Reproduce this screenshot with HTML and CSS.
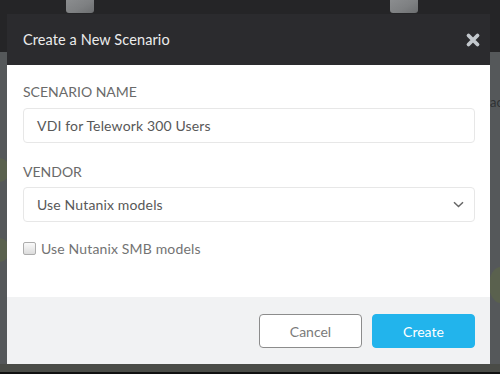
FILE: index.html
```html
<!DOCTYPE html>
<html>
<head>
<meta charset="utf-8">
<link rel="stylesheet" href="styles.css">
</head>
<body>
<div class="app">
  <div class="topbar">
    <span class="tile tile-a"></span>
    <span class="tile tile-b"></span>
  </div>
  <div class="canvas">
    <span class="blob blob-1"></span>
    <span class="blob blob-2"></span>
    <span class="blob blob-3"></span>
    <span class="bg-text">ac</span>
  </div>
  <div class="bottombar"></div>

  <div class="modal">
    <div class="modal-header">
      <h1 class="modal-title">Create a New Scenario</h1>
      <button class="close" aria-label="Close">
        <svg width="16" height="16" viewBox="0 0 16 16"><path d="M3.5 3.5 L12.5 12.5 M12.5 3.5 L3.5 12.5" stroke="#c3c8cd" stroke-width="3.8" stroke-linecap="round"/></svg>
      </button>
    </div>
    <div class="modal-body">
      <label class="field-label">SCENARIO NAME</label>
      <div class="input">VDI for Telework 300 Users</div>
      <label class="field-label vendor">VENDOR</label>
      <div class="input select">
        <span>Use Nutanix models</span>
        <svg width="11" height="7" viewBox="0 0 11 7"><path d="M1 1.2 L5.5 5.5 L10 1.2" fill="none" stroke="#666" stroke-width="1.5"/></svg>
      </div>
      <div class="check-row">
        <span class="checkbox"></span>
        <span class="check-text">Use Nutanix SMB models</span>
      </div>
    </div>
    <div class="modal-footer">
      <button class="btn btn-cancel">Cancel</button>
      <button class="btn btn-create">Create</button>
    </div>
  </div>
</div>
</body>
</html>
```

FILE: styles.css
```css
* { box-sizing: border-box; }
html, body { margin: 0; padding: 0; }
body {
  width: 500px;
  height: 374px;
  overflow: hidden;
  font-family: "Lato", "Open Sans", sans-serif;
  background: #262628;
}
.app {
  position: relative;
  width: 500px;
  height: 374px;
  display: flex;
  flex-direction: column;
}
.topbar {
  height: 52px;
  background: #252527;
  position: relative;
  flex: none;
}
.tile {
  position: absolute;
  top: 0;
  width: 28px;
  height: 13px;
  background: linear-gradient(150deg, #8b8d8f 0%, #7e8082 55%, #6c6e70 100%);
  border-bottom-right-radius: 3px;
  border-bottom-left-radius: 3px;
}
.tile-a { left: 66px; }
.tile-b { left: 390px; }
.canvas {
  flex: 1;
  position: relative;
  background: #55585a;
  overflow: hidden;
}
.blob {
  position: absolute;
  border-radius: 50%;
  background: #5f6a45;
  opacity: 0.55;
}
.blob-1 { left: -12px; top: 106px; width: 22px; height: 24px; }
.blob-2 { left: -12px; top: 186px; width: 22px; height: 24px; }
.blob-3 { left: 489px; top: 215px; width: 24px; height: 36px; }
.bg-text {
  position: absolute;
  left: 490px;
  top: 42px;
  color: #2f3234;
  font-size: 13px;
  line-height: 16px;
}
.bottombar {
  height: 10px;
  flex: none;
  background: linear-gradient(#4a4c47 0 8px, #111 8px);
}

.modal {
  position: absolute;
  left: 7px;
  top: 14px;
  width: 483px;
  display: flex;
  flex-direction: column;
}
.modal-header {
  height: 51px;
  background: #2b2b2e;
  display: flex;
  align-items: center;
  justify-content: space-between;
  padding: 0 8px 0 16px;
}
.modal-title {
  margin: 0;
  font-size: 14.5px;
  font-weight: 400;
  color: #ececec;
  letter-spacing: 0.1px;
}
.close {
  border: 0;
  background: none;
  padding: 0;
  width: 18px;
  height: 18px;
  display: flex;
  align-items: center;
  justify-content: center;
}
.modal-body {
  height: 232px;
  background: #ffffff;
  padding: 17px 15px 0 16px;
  display: flex;
  flex-direction: column;
}
.field-label {
  display: block;
  font-size: 14px;
  line-height: 20px;
  color: #6a6a6a;
  margin-bottom: 6px;
}
.field-label.vendor { margin-top: 19px; margin-bottom: 5px; }
.input {
  height: 35px;
  border: 1px solid #e7e7e7;
  border-radius: 4px;
  padding: 0 13px;
  display: flex;
  align-items: center;
  font-size: 14px;
  letter-spacing: 0.15px;
  color: #585858;
}
.select {
  height: 35px;
  justify-content: space-between;
  padding-right: 10px;
}
.check-row {
  margin-top: 16px;
  display: flex;
  align-items: center;
  gap: 5px;
  height: 20px;
}
.checkbox {
  width: 13px;
  height: 13px;
  border: 1px solid #adadad;
  border-radius: 2px;
  background: linear-gradient(#fafafa, #dcdcdc);
}
.check-text {
  font-size: 14px;
  letter-spacing: 0.15px;
  color: #737373;
}
.modal-footer {
  height: 67px;
  background: #f1f2f3;
  display: flex;
  justify-content: flex-end;
  align-items: flex-start;
  gap: 10px;
  padding: 17px 15px 0 0;
}
.btn {
  width: 103px;
  height: 34px;
  border-radius: 4px;
  font-family: inherit;
  font-size: 14px;
}
.btn-cancel {
  background: #ffffff;
  border: 1px solid #8c8c8c;
  color: #7a7a7a;
}
.btn-create {
  background: #22b4ec;
  border: 1px solid #22b4ec;
  color: #ffffff;
}
```
